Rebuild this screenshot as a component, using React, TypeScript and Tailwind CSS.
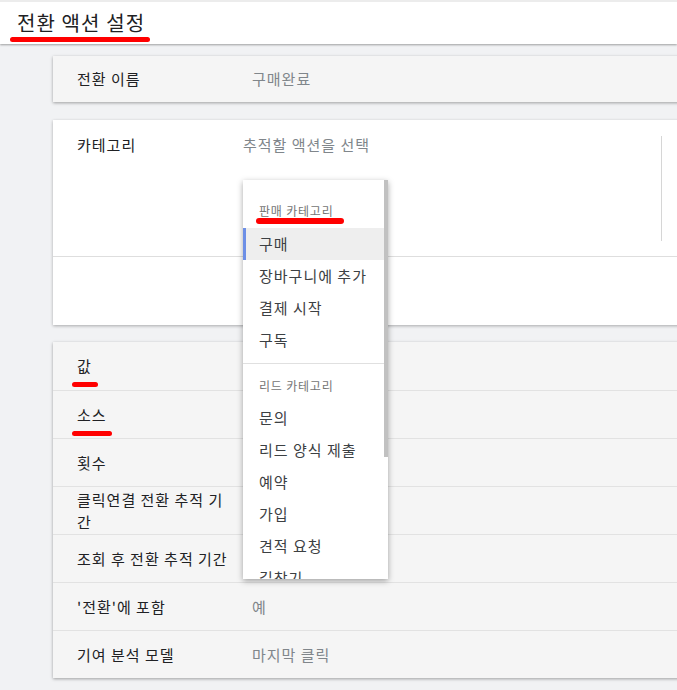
import React from "react";

const font = { fontFamily: '"Noto Sans CJK KR", "Noto Sans", sans-serif' };

function RedMark({ className }: { className: string }) {
  return <span className={"absolute rounded-full bg-[#ff0000] blur-[0.6px] " + className} />;
}

function Row({
  label,
  value,
  mark,
  first,
}: {
  label: React.ReactNode;
  value?: string;
  mark?: string;
  first?: boolean;
}) {
  return (
    <div className={"flex h-[48px] items-center " + (first ? "" : "border-t border-[#e2e2e2]")}>
      <div className="relative w-[199px] shrink-0 pl-[24px] pr-[23px] text-[15px] leading-[22px] tracking-[1px] text-[#202124]">
        {label}
        {mark && <RedMark className={mark} />}
      </div>
      {value && <div className="text-[15px] leading-[22px] tracking-[1px] text-[#80868b]">{value}</div>}
    </div>
  );
}

export default function App() {
  const sales = ["구매", "장바구니에 추가", "결제 시작", "구독"];
  const leads = ["문의", "리드 양식 제출", "예약", "가입", "견적 요청", "길찾기"];
  return (
    <div className="relative h-[690px] w-full overflow-hidden bg-[#f1f2f4]" style={font}>
      <div className="relative h-[44px] border-t-[2px] border-[#ececec] bg-white shadow-[0_1px_2px_rgba(0,0,0,0.35)]">
        <div className="pl-[17px] pt-[7px] text-[20px] leading-[28px] tracking-[1.1px] text-[#202124]">전환 액션 설정</div>
        <RedMark className="left-[10px] top-[35px] h-[5px] w-[140px]" />
      </div>

      <div className="ml-[53px] mt-[12px] flex h-[46px] w-[640px] items-center bg-[#f5f5f5] shadow-[0_1px_3px_rgba(0,0,0,0.35)]">
        <div className="w-[199px] pl-[24px] text-[15px] leading-[22px] tracking-[1px] text-[#202124]">전환 이름</div>
        <div className="text-[15px] leading-[22px] tracking-[1px] text-[#80868b]">구매완료</div>
      </div>

      <div className="ml-[53px] mt-[18px] h-[205px] w-[640px] bg-white shadow-[0_1px_3px_rgba(0,0,0,0.3)]">
        <div className="flex h-[137px] border-b border-[#dedede]">
          <div className="flex w-[608px] pt-[14px]">
            <div className="w-[190px] pl-[24px] text-[15px] leading-[22px] tracking-[1px] text-[#202124]">카테고리</div>
            <div className="text-[15px] leading-[22px] tracking-[1px] text-[#80868b]">추적할 액션을 선택</div>
          </div>
          <div className="mt-[16px] h-[105px] border-l border-[#d6d6d6]" />
        </div>
      </div>

      <div className="ml-[53px] mt-[17px] w-[640px] bg-[#f5f5f5] shadow-[0_1px_3px_rgba(0,0,0,0.35)]">
        <Row first label="값" mark="left-[19px] top-[27px] h-[5px] w-[26px]" />
        <Row label="소스" mark="left-[19px] top-[27px] h-[5px] w-[40px]" />
        <Row label="횟수" />
        <Row label="클릭연결 전환 추적 기간" />
        <Row label="조회 후 전환 추적 기간" />
        <Row label="'전환'에 포함" value="예" />
        <Row label="기여 분석 모델" value="마지막 클릭" />
      </div>

      <div className="absolute left-[243px] top-[180px] h-[399px] w-[145px] overflow-hidden bg-white shadow-[0_2px_6px_rgba(0,0,0,0.35)]">
        <div className="mr-[4px]">
          <div className="relative px-[16px] pb-[8px] pt-[22px] text-[12px] leading-[18px] tracking-[0.8px] text-[#757575]">
            판매 카테고리
            <RedMark className="left-[13px] top-[38px] h-[6px] w-[88px]" />
          </div>
          <div className="pb-[7px]">
            {sales.map((s, i) => (
              <div
                key={s}
                className={
                  "flex h-[32px] items-center whitespace-nowrap text-[15px] tracking-[1px] text-[#3c4043] " +
                  (i === 0 ? "border-l-[3px] border-[#6d8fe6] bg-[#eeeeee] pl-[13px]" : "pl-[16px]")
                }
              >
                {s}
              </div>
            ))}
          </div>
          <div className="border-t border-[#e0e0e0] px-[16px] pb-[7px] pt-[13px] text-[12px] leading-[18px] tracking-[0.8px] text-[#757575]">
            리드 카테고리
          </div>
          {leads.map((s) => (
            <div key={s} className="flex h-[32px] items-center whitespace-nowrap pl-[16px] text-[15px] tracking-[1px] text-[#3c4043]">
              {s}
            </div>
          ))}
        </div>
        <div className="absolute right-0 top-0 h-[277px] w-[4px] bg-[#c1c1c1]" />
      </div>
    </div>
  );
}
